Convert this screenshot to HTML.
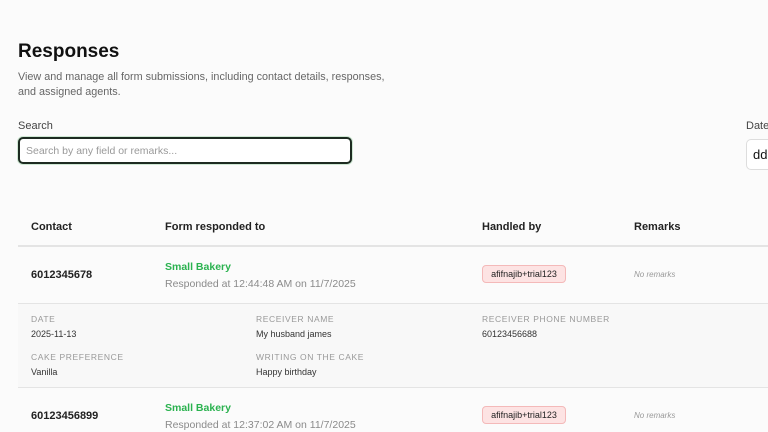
<!DOCTYPE html>
<html><head><style>
*{margin:0;padding:0;box-sizing:border-box}
body{width:768px;height:432px;overflow:hidden;background:#fbfbfb;font-family:"Liberation Sans",sans-serif;color:#111;position:relative}
.a{position:absolute;white-space:nowrap}
h1{position:absolute;left:18px;top:41px;font-size:19px;font-weight:bold;color:#111}
.desc{left:18px;font-size:10.8px;color:#666}
.lbl{font-size:11px;color:#444}
.inp{position:absolute;left:18px;top:137px;width:334px;height:27px;border:2px solid #1d2b21;border-radius:5px;background:#fff;font-size:10.5px;color:#999;padding:6px 6px;box-shadow:0 0 0 1px #cfe8d4}
.date{position:absolute;left:746px;top:139px;width:40px;height:31px;border:1px solid #ddd;border-radius:5px;background:#fff;font-size:13px;padding:7px 6px}
.th{font-size:11px;font-weight:bold;color:#222;top:221px}
.line{position:absolute;left:18px;right:0;height:1px;background:#e4e4e4}
.num{font-size:11px;font-weight:bold;color:#222}
.green{font-size:10.5px;font-weight:bold;color:#2ab24f}
.resp{font-size:10.5px;color:#8a8a8a}
.badge{position:absolute;left:482px;width:84px;height:18px;background:#fde3e3;border:1px solid #f4b9b9;border-radius:4px;font-size:9px;color:#222;text-align:center;line-height:16px}
.nr{font-size:8px;font-style:italic;color:#999}
.detail{position:absolute;left:18px;right:0;top:304px;height:83px;background:#f8f8f8}
.dl{font-size:8.5px;color:#999;letter-spacing:.6px}
.dv{font-size:9px;color:#333}
</style></head><body>
<h1>Responses</h1>
<div class="a desc" style="top:71px">View and manage all form submissions, including contact details, responses,</div>
<div class="a desc" style="top:86px">and assigned agents.</div>
<div class="a lbl" style="left:18px;top:120px">Search</div>
<div class="inp">Search by any field or remarks...</div>
<div class="a lbl" style="left:746px;top:120px">Date</div>
<div class="date">dd</div>

<div class="a th" style="left:31px">Contact</div>
<div class="a th" style="left:165px">Form responded to</div>
<div class="a th" style="left:482px">Handled by</div>
<div class="a th" style="left:634px">Remarks</div>
<div class="line" style="top:245px;height:2px"></div>

<div class="a num" style="left:31px;top:269px">6012345678</div>
<div class="a green" style="left:165px;top:261px">Small Bakery</div>
<div class="a resp" style="left:165px;top:278px">Responded at 12:44:48 AM on 11/7/2025</div>
<div class="badge" style="top:265px">afifnajib+trial123</div>
<div class="a nr" style="left:634px;top:270px">No remarks</div>
<div class="line" style="top:303px"></div>

<div class="detail"></div>
<div class="a dl" style="left:31px;top:314px">DATE</div>
<div class="a dv" style="left:31px;top:329px">2025-11-13</div>
<div class="a dl" style="left:256px;top:314px">RECEIVER NAME</div>
<div class="a dv" style="left:256px;top:329px">My husband james</div>
<div class="a dl" style="left:482px;top:314px">RECEIVER PHONE NUMBER</div>
<div class="a dv" style="left:482px;top:329px">60123456688</div>
<div class="a dl" style="left:31px;top:352px">CAKE PREFERENCE</div>
<div class="a dv" style="left:31px;top:367px">Vanilla</div>
<div class="a dl" style="left:256px;top:352px">WRITING ON THE CAKE</div>
<div class="a dv" style="left:256px;top:367px">Happy birthday</div>
<div class="line" style="top:387px"></div>

<div class="a num" style="left:31px;top:410px">60123456899</div>
<div class="a green" style="left:165px;top:402px">Small Bakery</div>
<div class="a resp" style="left:165px;top:419px">Responded at 12:37:02 AM on 11/7/2025</div>
<div class="badge" style="top:406px">afifnajib+trial123</div>
<div class="a nr" style="left:634px;top:411px">No remarks</div>
</body></html>
